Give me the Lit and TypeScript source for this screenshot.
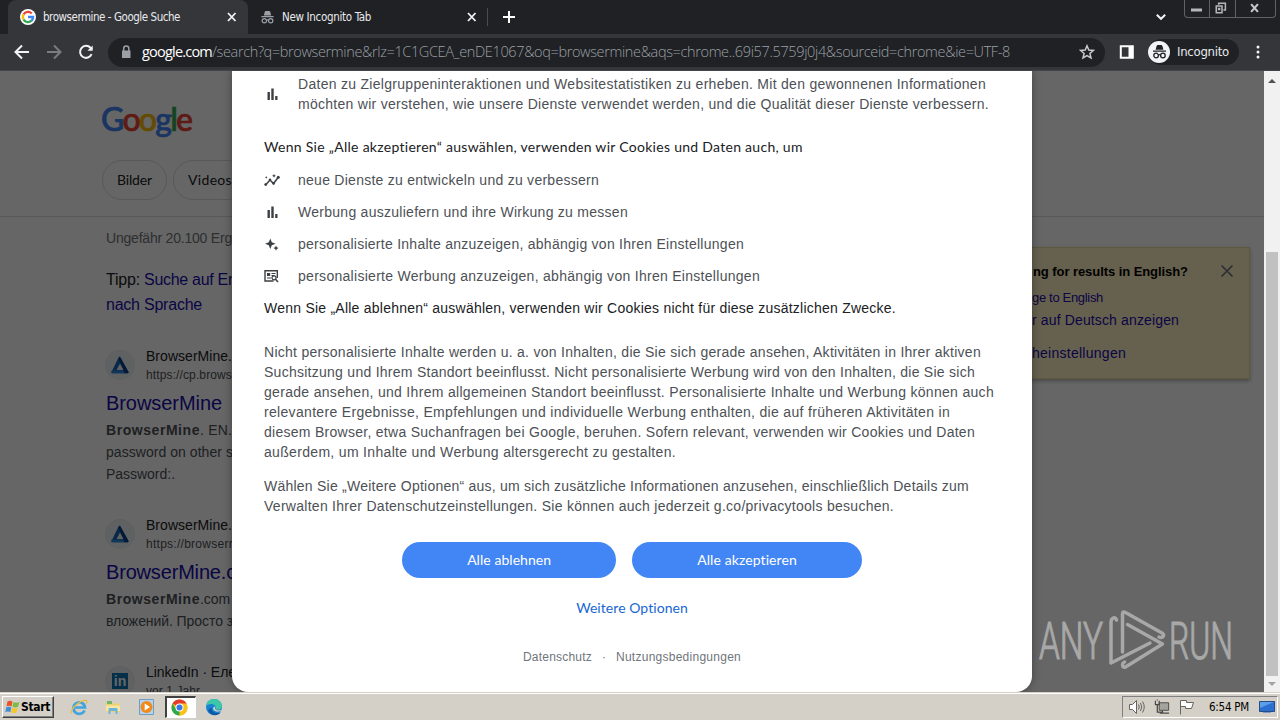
import {LitElement, html, css, svg} from 'lit';
import {customElement, property} from 'lit/decorators.js';
import {map} from 'lit/directives/map.js';

/**
 * One line of text, tracked so that it takes exactly `width` pixels
 */
@customElement('fit-line')
export class FitLine extends LitElement {

  @property()
  text = '';

  @property({type: Number})
  width = 0;

  static override styles = css`
    :host {
      display: inline-block;
      white-space: pre;
    }
  `;

  override render() {
    return html`<span>${this.text}</span>`;
  }

  protected override updated(): void {
    const span = this.renderRoot.querySelector('span') as HTMLElement;
    span.style.letterSpacing = '0';
    const natural = span.getBoundingClientRect().width;
    span.style.letterSpacing = (this.width - natural) / this.text.length + 'px';
  }
}

type Line = [string, number];

const line = (l: Line) => html`<fit-line .text=${l[0]} .width=${l[1]}></fit-line>`;

const bars = svg`<path d="M3.5 6h2.4v8H3.5zM7.3 2.5h2.4V14H7.3zM11.2 10h2.3v4h-2.3z"/>`;
const insights = svg`
  <path d="M2 12.5 6 8l3.500 3.500L14.500 5" fill="none" stroke="#3c4043" stroke-width="1.5"/>
  <circle cx="1.7" cy="12.6" r="1.4"/><circle cx="6" cy="7.8" r="1.3"/>
  <circle cx="9.6" cy="11.4" r="1.3"/><circle cx="14.3" cy="5.2" r="1.5"/>
  <path d="m10 1.8.6 1.4 1.4.6-1.4.6-.6 1.4-.6-1.4-1.4-.6 1.4-.6zM2.2 4l.5 1 .9.4-.9.4-.5 1-.4-1-1-.4 1-.4z"/>`;
const sparkle = svg`
  <path d="M6.3 2.5 7.8 6.3 11.6 7.8 7.8 9.3 6.3 13.1 4.8 9.3 1 7.8 4.8 6.3zM12 9.5l.8 1.8 1.8.8-1.8.8-.8 1.8-.8-1.8-1.8-.8 1.8-.8z"/>`;
const adSearch = svg`
  <path d="M13.3 10V2.7H1V13h8.5" fill="none" stroke="#3c4043" stroke-width="1.4"/>
  <path d="M3 5h3.2v3H3zM7.5 5h4v1h-4zM7.5 7h3v1h-3zM3 9.5h4v1H3z"/>
  <circle cx="10" cy="9.8" r="2" fill="none" stroke="#3c4043" stroke-width="1.2"/>
  <path d="m11.3 11 2.7 3" stroke="#3c4043" stroke-width="1.5"/>`;

const incognito = svg`
  <path d="M5 2.2 5.8 1h4.4l.8 1.2.9 3.600H4.100zM1.500 6.500h13v1.300h-13z"/>
  <g fill="none" stroke-width="1.3"><circle cx="4.6" cy="11.5" r="2.3"/><circle cx="11.4" cy="11.5" r="2.3"/><path d="M6.8 11q1.2-.8 2.4 0"/></g>`;

const chevronA = svg`
  <path d="M12 3.5 20.5 19q.3 1.2-1 1.2H4q-1 0-.5-1.2L10.3 5q.9-2 1.7-1.5z" fill="#1967b8"/>
  <path d="M12 4 20.5 19q.3 1.2-1 1.2H16L10.3 5z" fill="#0c3f87"/>
  <path d="M12 10.5 8.6 17h6.8z" fill="#f1f3f4"/><path d="M3.6 17.5h12l1 2.7H4q-1 0-.4-2.7z" fill="#2a8ae0"/>`;
const linkedin = svg`
  <rect x="4" y="4" width="16" height="16" fill="#0a77b5"/>
  <text x="12" y="17.3" class="in" text-anchor="middle">in</text>`;

@customElement('app-root')
export class AppRoot extends LitElement {

  purposes = [
    {icon: insights, text: ['neue Dienste zu entwickeln und zu verbessern', 301] as Line},
    {icon: bars, text: ['Werbung auszuliefern und ihre Wirkung zu messen', 330] as Line},
    {icon: sparkle, text: ['personalisierte Inhalte anzuzeigen, abhängig von Ihren Einstellungen', 446] as Line},
    {icon: adSearch, text: ['personalisierte Werbung anzuzeigen, abhängig von Ihren Einstellungen', 462] as Line},
  ];

  about: Line[] = [
    ['Nicht personalisierte Inhalte werden u. a. von Inhalten, die Sie sich gerade ansehen, Aktivitäten in Ihrer aktiven', 717],
    ['Suchsitzung und Ihrem Standort beeinflusst. Nicht personalisierte Werbung wird von den Inhalten, die Sie sich', 711],
    ['gerade ansehen, und Ihrem allgemeinen Standort beeinflusst. Personalisierte Inhalte und Werbung können auch', 730],
    ['relevantere Ergebnisse, Empfehlungen und individuelle Werbung enthalten, die auf früheren Aktivitäten in', 686],
    ['diesem Browser, etwa Suchanfragen bei Google, beruhen. Sofern relevant, verwenden wir Cookies und Daten', 711],
    ['außerdem, um Inhalte und Werbung altersgerecht zu gestalten.', 412],
  ];

  more: Line[] = [
    ['Wählen Sie „Weitere Optionen“ aus, um sich zusätzliche Informationen anzusehen, einschließlich Details zum', 705],
    ['Verwalten Ihrer Datenschutzeinstellungen. Sie können auch jederzeit g.co/privacytools besuchen.', 630],
  ];

  results = [
    {
      icon: chevronA, name: ['BrowserMine.', 86], url: ['https://cp.brows', 86], title: ['BrowserMine', 116],
      bold: ['BrowserMine', 94], rest: ['. EN.', 32], lines: [['password on other s', 127], ['Password:.', 69]],
    },
    {
      icon: chevronA, name: ['BrowserMine.', 86], url: ['https://browserr', 87], title: ['BrowserMine.c', 130],
      bold: ['BrowserMine', 94], rest: ['.com', 30], lines: [['вложений. Просто з', 127]],
    },
    {icon: linkedin, name: ['LinkedIn · Еле', 90], url: ['vor 1 Jahr', 54]},
  ] as any[];

  static override styles = css`
    :host {
      display: flex;
      flex-direction: column;
      width: 1280px;
      height: 720px;
      overflow: hidden;
      font-family: "Liberation Sans", Arial, sans-serif;
      font-size: 14px;
      line-height: 20px;
    }
    * {
      box-sizing: border-box;
    }
    svg {
      display: block;
      flex: none;
    }

    /* browser */
    .tabs {
      display: flex;
      flex: none;
      height: 34px;
      padding-left: 8px;
      background: #202124;
      color: #e8eaed;
      font: 11.5px/34px "DejaVu Sans Condensed", "DejaVu Sans", sans-serif;
    }
    .tab {
      display: flex;
      align-items: center;
      width: 240px;
      padding: 0 9px 0 12px;
      border-radius: 8px 8px 0 0;
    }
    .tab.active {
      background: #35363a;
    }
    .tab svg:first-child {
      margin-right: 7px;
    }
    .tab svg:last-child {
      margin-left: auto;
    }
    .divider {
      width: 1px;
      height: 18px;
      margin: 8px 14px 0 -1px;
      background: #4a4c50;
    }
    .tabs > svg {
      align-self: center;
    }
    .tabs > .down {
      margin: 0 17px 0 auto;
    }
    .controls {
      display: flex;
      width: 92px;
      height: 18px;
      margin-right: 4px;
      border: 1px solid #606266;
      border-top: 0;
      border-radius: 0 0 4px 4px;
    }
    .controls svg + svg {
      border-left: 1px solid #606266;
    }
    .toolbar {
      display: flex;
      flex: none;
      align-items: center;
      height: 37px;
      padding-left: 12px;
      background: #35363a;
      border-bottom: 1px solid #45434a;
    }
    .toolbar > svg {
      margin-right: 12px;
    }
    .address {
      display: flex;
      flex: none;
      align-items: center;
      width: 997px;
      height: 29px;
      padding: 0 10px;
      border-radius: 15px;
      background: #202124;
      color: #9aa0a6;
      font: 300 14.5px/28px "Open Sans", "Noto Sans", sans-serif;
    }
    .address .host {
      margin-left: 8px;
      color: #fff;
      font-weight: 400;
    }
    .address svg:last-child {
      margin-left: auto;
    }
    .toolbar > .panel {
      margin: 0 13px 0 14px;
    }
    .profile {
      display: flex;
      flex: none;
      align-items: center;
      gap: 7px;
      width: 91px;
      height: 26px;
      margin-right: 11px;
      border-radius: 13px;
      background: #202124;
      color: #e8eaed;
      font: 13px/26px "DejaVu Sans Condensed", "DejaVu Sans", sans-serif;
    }

    /* page */
    .viewport {
      display: flex;
      flex: none;
      height: 621px;
    }
    .page {
      position: relative;
      width: 1264px;
      overflow: hidden;
      background: #fff;
      color: #202124;
    }
    header {
      height: 146px;
      padding: 28px 0 0 102px;
      border-bottom: 1px solid #dadce0;
    }
    .logo {
      overflow: visible;
    }
    .logo text {
      font: 500 32px Lato, sans-serif;
      stroke-width: .7px;
    }
    .blue {
      fill: #4285f4;
      stroke: #4285f4;
    }
    .red {
      fill: #ea4335;
      stroke: #ea4335;
    }
    .yellow {
      fill: #fbbc05;
      stroke: #fbbc05;
    }
    .green {
      fill: #34a853;
      stroke: #34a853;
    }
    .chips {
      display: flex;
      gap: 6px;
      margin-top: 17px;
    }
    .chip {
      height: 40px;
      padding: 0 14px;
      border: 1px solid #dadce0;
      border-radius: 20px;
      font: 14px/38px Lato, sans-serif;
    }
    .columns {
      display: flex;
    }
    main {
      flex: none;
      width: 886px;
      padding: 11px 0 0 106px;
    }
    .stats {
      color: #70757a;
    }
    .tip {
      margin: 19px 0 29px;
      font-size: 16px;
      line-height: 25px;
    }
    .tip div {
      display: flex;
      gap: 4px;
    }
    .link {
      color: #1a0dab;
    }
    .result {
      margin-bottom: 30px;
    }
    .site {
      display: flex;
      align-items: center;
      gap: 12px;
      height: 38px;
    }
    .site > svg {
      width: 28px;
      padding: 2px;
      border-radius: 14px;
      background: #f1f3f4;
      box-shadow: 0 0 0 1px #ecedef;
    }
    .in {
      fill: #fff;
      font: bold 14px "Liberation Sans", sans-serif;
    }
    .site div {
      display: flex;
      flex-direction: column;
    }
    .url {
      color: #4d5156;
      font-size: 12px;
      line-height: 18px;
    }
    .title {
      margin: 6px 0 3px;
      color: #1a0dab;
      font-size: 20px;
      line-height: 26px;
    }
    .snippet {
      display: flex;
      color: #4d5156;
      line-height: 22px;
    }
    aside {
      display: flex;
      flex-direction: column;
      width: 364px;
      height: 132px;
      margin-top: 30px;
      padding: 15px 15px 0 146px;
      border: 1px solid #f0dc96;
      background: #fff0c3;
      box-shadow: 0 2px 4px rgba(0, 0, 0, .3);
      color: #1a0dab;
    }
    .question {
      display: flex;
      justify-content: space-between;
      color: #000;
      font-weight: bold;
      font-size: 13px;
      line-height: 18px;
    }
    .english {
      margin: 7px 0 0 -1px;
      font-size: 13px;
    }
    .german {
      margin: 2px 0 0 -1px;
    }
    .settings {
      margin: 13px 0 0 -1px;
    }
    .shade {
      position: absolute;
      inset: 0;
      background: rgba(0, 0, 0, .6);
    }

    /* consent dialog */
    .dialog {
      position: absolute;
      top: 0;
      left: 232px;
      width: 800px;
      height: 621px;
      padding: 3px 32px 0;
      border-radius: 0 0 16px 16px;
      background: #fff;
      box-shadow: 0 0 10px rgba(0, 0, 0, .35);
      color: #4d5156;
    }
    .dialog p {
      display: flex;
      flex-direction: column;
      margin: 0 0 14px;
    }
    .dialog p.strong {
      color: #202124;
    }
    .dialog p.heading {
      margin: 23px 0 13px;
    }
    .dialog p.reject {
      margin: 0 0 24px;
    }
    .dialog .brand {
      font-family: Lato, sans-serif;
    }
    .purpose {
      display: flex;
      align-items: center;
      gap: 18px;
      margin-bottom: 12px;
    }
    .purpose svg {
      fill: #3c4043;
    }
    .purpose div {
      display: flex;
      flex-direction: column;
    }
    .buttons {
      display: flex;
      justify-content: center;
      gap: 16px;
      margin-top: 26px;
    }
    .button {
      height: 36px;
      padding: 0 65px;
      border-radius: 18px;
      background: #4285f4;
      color: #fff;
      line-height: 35px;
    }
    .options {
      margin-top: 20px;
      color: #1967d2;
      text-align: center;
    }
    .legal {
      display: flex;
      justify-content: center;
      gap: 10px;
      margin-top: 29px;
      color: #70757a;
      font-size: 12px;
    }
    .watermark {
      position: absolute;
      right: 32px;
      bottom: 18px;
      overflow: visible;
    }
    .watermark text {
      fill: #a8a8a8;
      stroke: #a8a8a8;
      stroke-width: 1.2px;
      font: 300 52px Roboto, sans-serif;
    }
    .scrollbar {
      display: flex;
      flex-direction: column;
      align-items: center;
      width: 16px;
      background: #f1f1f1;
    }
    .thumb {
      width: 12px;
      height: 424px;
      margin-top: 165px;
      background: #c1c1c1;
    }

    /* taskbar */
    .taskbar {
      display: flex;
      flex: 1;
      align-items: center;
      padding: 3px 2px 1px;
      background: #d4d0c8;
      box-shadow: inset 0 1px #d4d0c8, inset 0 2px #fff;
      color: #000;
      font: 11.5px/20px "DejaVu Sans Condensed", "DejaVu Sans", sans-serif;
    }
    .start {
      display: flex;
      align-items: center;
      width: 52px;
      height: 22px;
      margin-right: 16px;
      padding-left: 2px;
      border: 1px solid;
      border-color: #fff #404040 #404040 #fff;
      box-shadow: inset -1px -1px #808080;
      font-weight: bold;
      font-size: 12px;
    }
    .quick {
      display: flex;
      align-items: center;
      gap: 16px;
    }
    .pressed {
      height: 22px;
      margin: 0 -7px;
      padding: 1px 7px 0 4px;
      border: 1px solid;
      border-color: #404040 #fff #fff #404040;
      border-width: 2px 1px 1px 2px;
      background: #fff;
    }
    .tray {
      display: flex;
      align-items: center;
      gap: 8px;
      width: 156px;
      height: 22px;
      margin-left: auto;
      padding-left: 5px;
      border: 1px solid;
      border-color: #808080 #fff #fff #808080;
    }
    .tray fit-line {
      margin: 0 2px 0 5px;
    }
  `;

  private _close() {
    return svg`<svg width="14" height="14" viewBox="0 0 14 14"><path d="m3 3 7.5 8M10.5 3 3 11" stroke="#f1f3f4" stroke-width="1.8"/></svg>`;
  }

  private _gIcon() {
    return html`
      <svg width="16" height="16" viewBox="0 0 16 16">
        <circle cx="8" cy="8" r="8" fill="#fff"/>
        <g fill="none" stroke-width="2.3">
          <path d="M3.6 5.4A5.1 5.1 0 0 1 11.7 4.5" stroke="#ea4335"/>
          <path d="M3.7 10.7A5.1 5.1 0 0 1 3.6 5.3" stroke="#fbbc05"/>
          <path d="M11.5 11.7A5.1 5.1 0 0 1 3.6 10.6" stroke="#34a853"/>
          <path d="M8 8h5.1A5.1 5.1 0 0 1 11.4 11.8" stroke="#4285f4"/>
        </g>
      </svg>`;
  }

  private _browser() {
    return html`
      <div class="tabs">
        <div class="tab active">
          ${this._gIcon()}
          ${line(['browsermine - Google Suche', 137])}
          ${this._close()}
        </div>
        <div class="tab">
          <svg width="15" height="15" viewBox="0 0 16 16" fill="#9aa0a6" stroke="#9aa0a6" stroke-width="0">${incognito}</svg>
          ${line(['New Incognito Tab', 89])}
          ${this._close()}
        </div>
        <div class="divider"></div>
        <svg width="14" height="14" viewBox="0 0 14 14"><path d="M7 1v12M1 7h12" stroke="#fff" stroke-width="2"/></svg>
        <svg class="down" width="12" height="8" viewBox="0 0 12 8"><path d="m1.8 1.8 4.2 4 4.2-4" fill="none" stroke="#f1f3f4" stroke-width="2"/></svg>
        <div class="controls">
          <svg width="24" height="17" viewBox="0 0 24 17"><path d="M6 8.500h11v3H6z" fill="#b4b6ba"/></svg>
          <svg width="26" height="17" viewBox="0 0 26 17" fill="none" stroke="#b4b6ba" stroke-width="1.600"><path d="M9 4.500V3h7v7h-2M6.500 6h6v7h-6zM9 8.500h1v1H9z"/></svg>
          <svg width="40" height="17" viewBox="0 0 40 17"><path d="m15.500 4 7 8M22.500 4l-7 8" stroke="#c4c6ca" stroke-width="2.200"/></svg>
        </div>
      </div>
      <div class="toolbar">
        <svg width="20" height="20" viewBox="0 0 20 20" fill="none" stroke="#f1f3f4" stroke-width="2"><path d="M17 10H4M10 3.500 3.500 10l6.500 6.500"/></svg>
        <svg width="20" height="20" viewBox="0 0 20 20" fill="none" stroke="#7a7c80" stroke-width="2"><path d="M3 10h13M10 3.500l6.500 6.500-6.500 6.500"/></svg>
        <svg width="20" height="20" viewBox="0 0 20 20" fill="none" stroke="#f1f3f4" stroke-width="2"><path d="M15.600 12.200A6 6 0 1 1 14.500 5.800L16 7.500"/><path d="M16.700 3.500v5.300h-5.300z" fill="#f1f3f4" stroke="none"/></svg>
        <div class="address">
          <svg width="16" height="16" viewBox="0 0 16 16"><path d="M4 6.500h8.500V14H4z" fill="#9aa0a6"/><path d="M5.700 7V4.600a2.550 2.550 0 0 1 5.100 0V7" fill="none" stroke="#9aa0a6" stroke-width="1.500"/></svg>
          <fit-line class="host" .text=${'google.com'} .width=${70}></fit-line>
          ${line(['/search?q=browsermine&rlz=1C1GCEA_enDE1067&oq=browsermine&aqs=chrome..69i57.5759j0j4&sourceid=chrome&ie=UTF-8', 798])}
          <svg width="16" height="16" viewBox="0 0 16 16"><path d="m8 1.800 1.800 4.200 4.600.4-3.500 3 1.100 4.500L8 11.500l-4 2.400 1.100-4.500-3.500-3 4.600-.4z" fill="none" stroke="#c8cacd" stroke-width="1.500"/></svg>
        </div>
        <svg class="panel" width="16" height="16" viewBox="0 0 16 16"><path d="M1.800 2.300h12v11.500h-12z" fill="none" stroke="#fff" stroke-width="2"/><path d="M9.500 2h4v12h-4z" fill="#fff"/></svg>
        <div class="profile">
          <svg width="22" height="22" viewBox="0 0 22 22"><circle cx="11" cy="11" r="11" fill="#f1f3f4"/><g transform="translate(3.500 3)" fill="#202124" stroke="#202124" stroke-width="0">${incognito}</g></svg>
          ${line(['Incognito', 52])}
        </div>
        <svg width="16" height="16" viewBox="0 0 16 16" fill="#f1f3f4"><circle cx="8" cy="3" r="1.500"/><circle cx="8" cy="8" r="1.500"/><circle cx="8" cy="13" r="1.500"/></svg>
      </div>`;
  }

  private _results() {
    return html`
      <header>
        <svg class="logo" width="94" height="44" viewBox="0 0 94 44">
          <text x="-1" y="32" textLength="92"><tspan class="blue">G</tspan><tspan class="red">o</tspan><tspan class="yellow">o</tspan><tspan class="blue">g</tspan><tspan class="green">l</tspan><tspan class="red">e</tspan></text>
        </svg>
        <div class="chips">
          <div class="chip">${line(['Bilder', 35])}</div>
          <div class="chip">${line(['Videos', 44])}</div>
        </div>
      </header>
      <div class="columns">
        <main>
          <div class="stats">${line(['Ungefähr 20.100 Erg', 126])}</div>
          <div class="tip">
            <div>${line(['Tipp:', 34])}<span class="link">${line(['Suche auf Er', 89])}</span></div>
            <div class="link">${line(['nach Sprache', 96])}</div>
          </div>
          ${map(this.results, (r) => html`
            <div class="result">
              <div class="site">
                <svg width="28" height="28" viewBox="0 0 24 24">${r.icon}</svg>
                <div>${line(r.name)}<span class="url">${line(r.url)}</span></div>
              </div>
              ${r.title ? html`
                <div class="title">${line(r.title)}</div>
                <div class="snippet"><b>${line(r.bold)}</b>${line(r.rest)}</div>
                ${map(r.lines as Line[], (l) => html`<div class="snippet">${line(l)}</div>`)}` : ''}
            </div>`)}
        </main>
        <aside>
          <div class="question">
            ${line(['ng for results in English?', 155])}
            <svg width="14" height="16" viewBox="0 0 14 16"><path d="m1.500 2.500 11 11M12.500 2.500l-11 11" stroke="#70757a" stroke-width="1.700"/></svg>
          </div>
          <div class="english">${line(['ge to English', 71])}</div>
          <div class="german">${line(['r auf Deutsch anzeigen', 147])}</div>
          <div class="settings">${line(['heinstellungen', 94])}</div>
        </aside>
      </div>`;
  }

  private _dialog() {
    return html`
      <div class="dialog">
        <div class="purpose">
          <svg width="16" height="16" viewBox="0 0 16 16">${bars}</svg>
          <div>
            ${line(['Daten zu Zielgruppeninteraktionen und Websitestatistiken zu erheben. Mit den gewonnenen Informationen', 688])}
            ${line(['möchten wir verstehen, wie unsere Dienste verwendet werden, und die Qualität dieser Dienste verbessern.', 691])}
          </div>
        </div>
        <p class="strong brand heading">${line(['Wenn Sie „Alle akzeptieren“ auswählen, verwenden wir Cookies und Daten auch, um', 539])}</p>
        ${map(this.purposes, (p) => html`
          <div class="purpose">
            <svg width="16" height="16" viewBox="0 0 16 16">${p.icon}</svg>
            ${line(p.text)}
          </div>`)}
        <p class="strong reject">${line(['Wenn Sie „Alle ablehnen“ auswählen, verwenden wir Cookies nicht für diese zusätzlichen Zwecke.', 632])}</p>
        <p>${map(this.about, line)}</p>
        <p>${map(this.more, line)}</p>
        <div class="buttons brand">
          <div class="button">${line(['Alle ablehnen', 84])}</div>
          <div class="button">${line(['Alle akzeptieren', 100])}</div>
        </div>
        <div class="options brand">${line(['Weitere Optionen', 112])}</div>
        <div class="legal">${line(['Datenschutz', 69])}<span>·</span>${line(['Nutzungsbedingungen', 125])}</div>
      </div>`;
  }

  private _watermark() {
    return html`
      <svg class="watermark" width="194" height="66" viewBox="0 0 194 66">
        <text x="1" y="51" textLength="64" lengthAdjust="spacingAndGlyphs">ANY</text>
        <g fill="none" stroke="#a8a8a8" stroke-width="3.500" stroke-linejoin="round" stroke-linecap="round">
          <path d="M78.500 12q-1-3.500-4-1.500-1.500 1-1.500 3.500V55L112 35"/>
          <path d="M84.500 44V6q0-3 3-1.500L124 25q3 2 .5 4-1.500 1-3.500 0"/>
          <path d="M89.500 16.500 124.500 36 87.500 59q-3 1-3-2.500 0-1.500 2-2.500"/>
        </g>
        <text x="131" y="51" textLength="64" lengthAdjust="spacingAndGlyphs">RUN</text>
      </svg>`;
  }

  private _taskbar() {
    return html`
      <div class="taskbar">
        <div class="start">
          <svg width="16" height="16" viewBox="0 0 16 16">
            <path d="M2.500 2.500q3-1.500 5 .3L6.500 7.500q-2-1.500-5-.3z" fill="#e8542a"/><path d="M8.500 3q2.500 1.500 6 0L13 7.800q-3 1.500-5.500 0z" fill="#7dbb42"/>
            <path d="M1.300 8.300q3-1.300 5 .3l-1 4.600q-2-1.500-5-.2z" fill="#3f8fd6"/><path d="M7.200 8.800q2.600 1.500 5.600 0l-1.300 4.600q-2.500 1.500-5.400-.1z" fill="#f7c52c"/>
          </svg>
          ${line(['Start', 29])}
        </div>
        <div class="quick">
          <svg width="18" height="18" viewBox="0 0 18 18" fill="none"><path d="M14.500 12.500A5.800 5.800 0 1 1 15 9.500H4" stroke="#42a4de" stroke-width="2.700"/><path d="M1.500 15.500C-.5 12 10 1.500 16.500 2.500q1 .8-.2 3" stroke="#e8bd45" stroke-width="1.300"/></svg>
          <svg width="18" height="18" viewBox="0 0 18 18"><path d="M2 4h6l1 1.500h7V14H2z" fill="#ecd173"/><path d="M3 3h5v3H3z" fill="#71b66a"/><path d="M2 7.500h14V13H2z" fill="#f7e7a2"/><path d="M4.500 16v-5q0-1 1-1h7q1 0 1 1v5h-2v-3h-5v3z" fill="#6cb4e0"/></svg>
          <svg width="18" height="18" viewBox="0 0 18 18"><path d="M1.500 1.500h14v15h-14z" fill="#b7d3ea" stroke="#6c9fc8"/><circle cx="8.500" cy="9" r="6" fill="#f08a1c"/><path d="m6.700 5.500 5.300 3.500-5.300 3.500z" fill="#fff"/></svg>
          <div class="pressed">
            <svg width="17" height="17" viewBox="0 0 18 18"><circle cx="9" cy="9" r="8.500" fill="#fbc116"/><path d="M9 9 1.600 4.800A8.500 8.500 0 0 1 16.400 4.800z" fill="#e33b2e"/><path d="M9 17.500A8.500 8.500 0 0 1 1.600 4.800L6 12l3 1z" fill="#2da94f"/><path d="m9 4.800h7.400A8.500 8.500 0 0 1 9 17.500l3.700-6.400z" fill="#fbc116"/><circle cx="9" cy="9" r="4.200" fill="#fff"/><circle cx="9" cy="9" r="3.200" fill="#3b78e7"/></svg>
          </div>
          <svg width="18" height="18" viewBox="0 0 18 18"><circle cx="9" cy="9" r="8" fill="#1583d2"/><path d="M1.200 8Q2 1 9 1q7.300.4 8 7-.2 4-4 3.800-3.500 0-2-2.300Q10 5.500 5.500 6 2.500 6.500 1.200 8z" fill="#3ec6a8"/><path d="M6.500 9.500q-.5 6 8 5.500l1.500-1Q13 18 8 17-.5 13 6.500 9.500z" fill="#0c59a4"/><path d="M10.500 8.500q-1.500 2.800 1.700 3.900l4.300-.5q-2 2.200-5.200 1.600Q7 12 8.500 9z" fill="#d4d0c8"/></svg>
        </div>
        <div class="tray">
          <svg width="18" height="16" viewBox="0 0 18 16" fill="none" stroke="#66645f"><path d="M1.500 5.500h3l4-4v13l-4-4h-3z" fill="#fff"/><path d="M10.500 5.500q1.500 2.500 0 5M12.500 4q2.500 4 0 8M14.500 2.500q3.500 5.500 0 11"/></svg>
          <svg width="17" height="16" viewBox="0 0 18 16" fill="none" stroke="#4b4a46"><path d="M5.500 3.500h10v8h-10z" fill="#a5a39d"/><path d="M1.500 1.500v4h4v-4M3.500 1v-1M3.500 5.500v8h5M6 14.500h10M9 12v2" stroke-width="1.300"/></svg>
          <svg width="17" height="16" viewBox="1 0 17 16" fill="#fff" stroke="#66645f"><path d="M2.500 15.500v-14h6v2h7l-2 6h-6v-2h-5"/></svg>
          ${line(['6:54 PM', 40])}
          <svg width="16" height="14" viewBox="0 0 16 14"><path d="M.5 1.500h15v10H.5z" fill="#2b6fd0" stroke="#244c86"/><path d="M1 2h14L1 8z" fill="#5c9ee8"/><path d="M4 12.500h8" stroke="#7b9bc4"/></svg>
        </div>
      </div>`;
  }

  override render() {
    return html`
      ${this._browser()}
      <div class="viewport">
        <div class="page">
          ${this._results()}
          <div class="shade"></div>
          ${this._watermark()}
          ${this._dialog()}
        </div>
        <div class="scrollbar">
          <svg width="16" height="16" viewBox="0 0 16 16"><path d="m4 12 4-4 4 4z" fill="#505050"/></svg>
          <div class="thumb"></div>
          <svg width="16" height="16" viewBox="0 0 16 16"><path d="m4 6 4 4 4-4z" fill="#a3a3a3"/></svg>
        </div>
      </div>
      ${this._taskbar()}`;
  }
}

declare global {
  interface HTMLElementTagNameMap {
    'fit-line': FitLine;
    'app-root': AppRoot;
  }
}
